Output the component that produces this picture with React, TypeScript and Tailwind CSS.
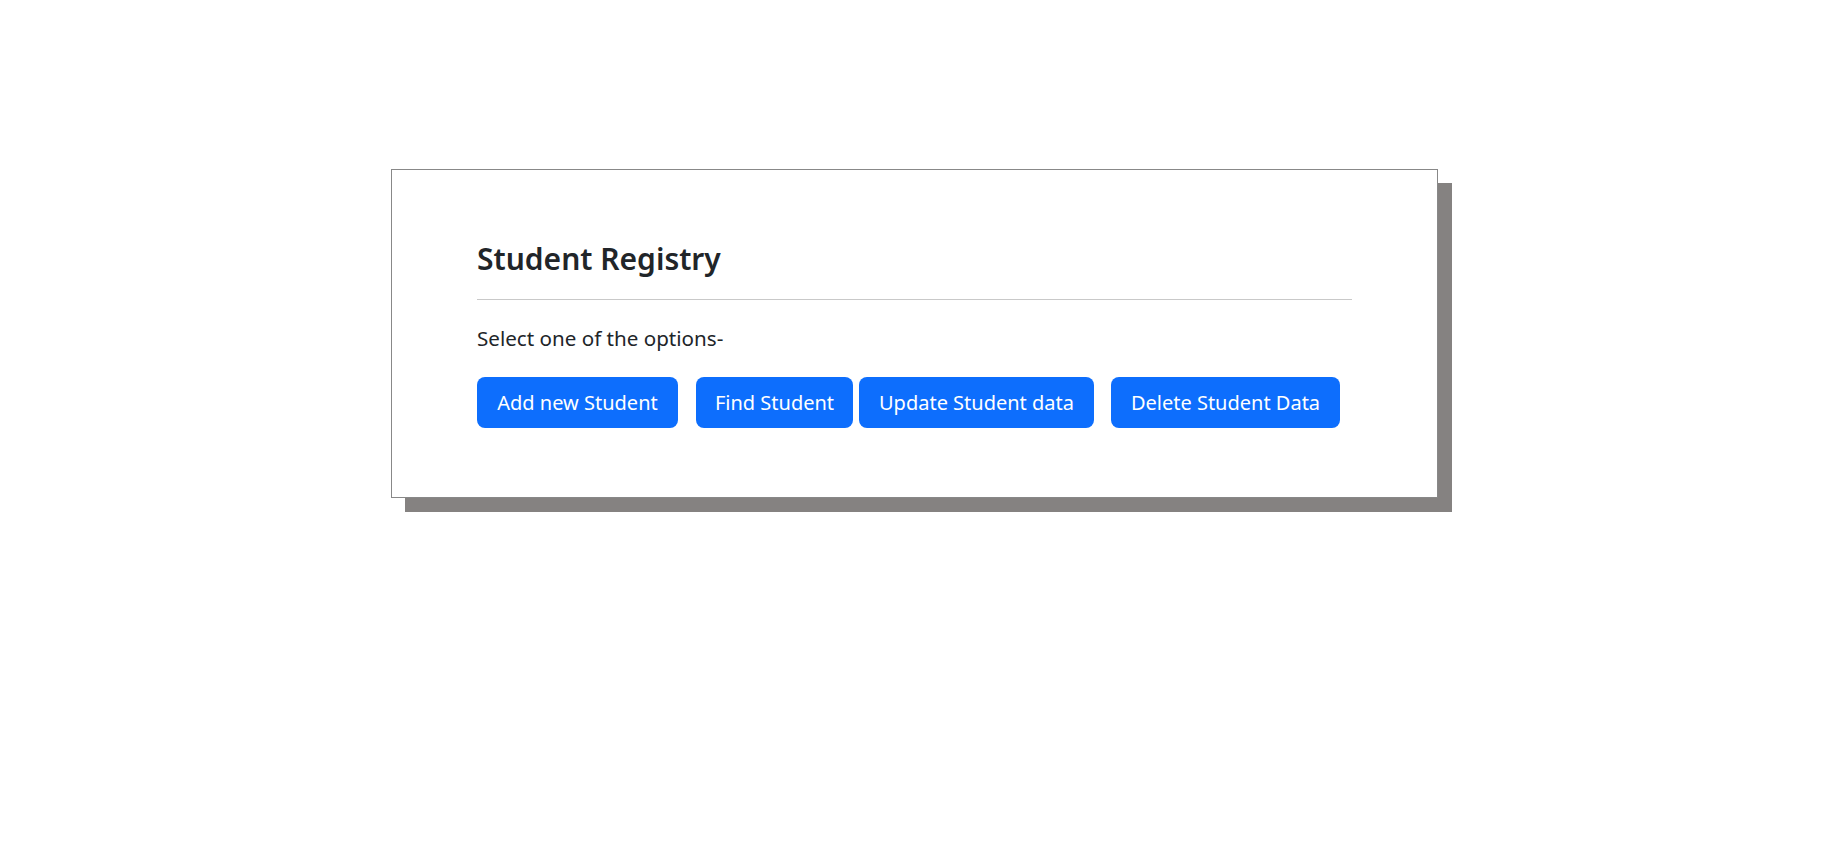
import React from 'react'

const options = [
  { label: 'Add new Student', width: 'w-[201px]', margin: 'mr-[18px]' },
  { label: 'Find Student', width: 'w-[157px]', margin: 'mr-[6px]' },
  { label: 'Update Student data', width: 'w-[235px]', margin: 'mr-[17px]' },
  { label: 'Delete Student Data', width: 'w-[229px]', margin: '' },
]

export default function App() {
  return (
    <div className="min-h-[859px] w-full bg-white pt-[169px] font-['Segoe_UI','Noto_Sans',sans-serif] text-[#212529]">
      <div className="mx-auto w-[1047px] border border-[#888] bg-white px-[85px] pt-[68px] pb-[69px] shadow-[14px_14px_0_0_#858281]">
        <h3 className="text-[30px] font-semibold leading-[42px]">Student Registry</h3>
        <hr className="mt-[19px] mb-[23px] border-t border-[#c9c9c9]" />
        <p className="text-[20.6px] leading-[30px]">Select one of the options-</p>
        <div className="mt-[24px] flex">
          {options.map((o) => (
            <button
              key={o.label}
              className={`${o.width} ${o.margin} flex h-[51px] shrink-0 items-center justify-center rounded-[8px] bg-[#0d6efd] text-[20px] text-white`}
            >
              {o.label}
            </button>
          ))}
        </div>
      </div>
    </div>
  )
}
